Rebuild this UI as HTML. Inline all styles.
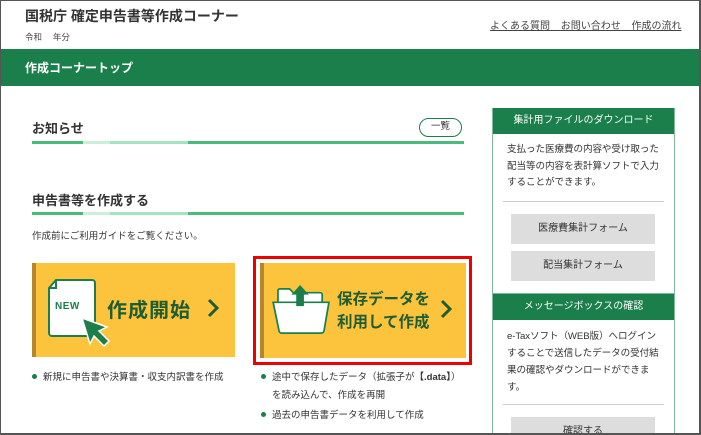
<!DOCTYPE html>
<html style="width:701px;height:435px;overflow:hidden"><head><meta charset="utf-8"><style>
*{margin:0;padding:0;box-sizing:border-box}
body{width:701px;height:435px;overflow:hidden;background:#fff;font-family:"Liberation Sans","Noto Sans CJK JP",sans-serif;color:#333;position:relative}
.frame{position:absolute;left:0;top:0;width:701px;height:435px;border:1px solid #555;border-right-width:2px;border-bottom-width:2px;pointer-events:none;z-index:10}
.abs{position:absolute;white-space:nowrap}
.bar{position:absolute;height:3px;left:32px;width:432px;background:linear-gradient(to right,#4cba7f 0,#4cba7f 51px,#cdeedb 51px,#cdeedb 78px,#a3e2c2 78px,#a3e2c2 156px,#4cba7f 156px)}
.card{position:absolute;background:#fcc43c;border-left:4px solid #b5862d}
.bul{position:absolute;font-size:9.5px;color:#333;white-space:nowrap}
.bul:before{content:"";display:inline-block;width:5px;height:5px;border-radius:50%;background:#1a7f4b;margin-right:6px;vertical-align:1px}
.side{position:absolute;left:492px;width:183px;border:1px solid #7fb89a;border-top:none;overflow:hidden}
.sh{background:#1a7f4b;color:#fff;font-size:10px;text-align:center;height:26px;line-height:26px;white-space:nowrap}
.sb{font-size:9.6px;line-height:16.5px;padding:8px 0 0 14px;color:#333;white-space:nowrap;letter-spacing:-0.1px}
.btn{background:#ddd;width:144px;height:30px;margin-left:18px;text-align:center;line-height:30px;font-size:10px;color:#333}
</style></head><body>
<div class="frame"></div>
<div class="abs" style="left:25px;top:6px;font-size:14px;font-weight:bold;color:#333">国税庁 確定申告書等作成コーナー</div>
<div class="abs" style="left:25px;top:31px;font-size:8.5px;color:#444">令和　 年分</div>
<div class="abs" style="left:490px;top:17px;font-size:10px;color:#444;text-decoration:underline;word-spacing:8px">よくある質問 お問い合わせ 作成の流れ</div>
<div class="abs" style="left:0;top:49px;width:701px;height:37px;background:#1a7f4b"></div>
<div class="abs" style="left:25px;top:59px;font-size:12px;font-weight:bold;color:#fff">作成コーナートップ</div>

<div class="abs" style="left:32px;top:118px;font-size:13px;font-weight:bold;color:#333">お知らせ</div>
<div class="abs" style="left:419px;top:118px;width:43px;height:19px;border:1.5px solid #1a7f4b;border-radius:10px;font-size:9.5px;text-align:center;line-height:16px;background:#fff">一覧</div>
<div class="bar" style="top:141px"></div>

<div class="abs" style="left:32px;top:190px;font-size:13px;font-weight:bold;color:#333">申告書等を作成する</div>
<div class="bar" style="top:212px"></div>
<div class="abs" style="left:32px;top:228px;font-size:9.5px;color:#333">作成前にご利用ガイドをご覧ください。</div>

<div class="card" style="left:32px;top:263px;width:203px;height:94px"></div>
<svg class="abs" style="left:47px;top:279px" width="66" height="68" viewBox="0 0 66 68">
<path d="M9 1 H45 a3 3 0 0 1 3 3 V54 a3 3 0 0 1 -3 3 H5 a3 3 0 0 1 -3 -3 V9 Z" fill="#fff" stroke="#1a7f4b" stroke-width="2"/>
<path d="M9 1 V9 H2" fill="none" stroke="#1a7f4b" stroke-width="2"/>
<text x="8" y="30" font-family="Liberation Sans" font-weight="bold" font-size="10" fill="#1a7f4b" letter-spacing="0.5">NEW</text>
<path d="M35 39 L60 48 L52 52 L62 62 L57 67 L47 57 L43 65 Z" fill="#1a7f4b" stroke="#fff" stroke-width="1.5"/>
</svg>
<div class="abs" style="left:107px;top:294px;font-size:20px;font-weight:bold;color:#1f5c32;letter-spacing:1px">作成開始</div>
<svg class="abs" style="left:206px;top:298px" width="14" height="20"><path d="M3 2 L11 10 L3 18" fill="none" stroke="#1f5c32" stroke-width="3"/></svg>

<div class="abs" style="left:253px;top:256px;width:219px;height:109px;border:3px solid #ee0000"></div>
<div class="card" style="left:260px;top:263px;width:206px;height:95px"></div>
<svg class="abs" style="left:272px;top:285px" width="60" height="50" viewBox="0 0 62 52">
<path d="M6 6 a2 2 0 0 1 2 -2 H18 L22 8 H50 a2 2 0 0 1 2 2 V20 H6 Z" fill="#fff" stroke="#1a7f4b" stroke-width="1.8"/>
<path d="M1 18 H59 L54 47 a3 3 0 0 1 -3 3 H10 a3 3 0 0 1 -3 -3 Z" fill="#fff" stroke="#1a7f4b" stroke-width="1.8"/>
<path d="M29 0 L38 10 H33 V22 H25 V10 H20 Z" fill="#1a7f4b"/>
</svg>
<div class="abs" style="left:337px;top:288px;font-size:15.5px;font-weight:bold;color:#1f5c32;line-height:23px">保存データを<br>利用して作成</div>
<svg class="abs" style="left:439px;top:299px" width="14" height="20"><path d="M3 2 L11 10 L3 18" fill="none" stroke="#1f5c32" stroke-width="3"/></svg>

<div class="bul" style="left:32px;top:369px">新規に申告書や決算書・収支内訳書を作成</div>
<div class="bul" style="left:261px;top:369px">途中で保存したデータ（拡張子が<b>【.data】</b>）</div>
<div class="abs" style="left:272px;top:387px;font-size:9.5px">を読み込んで、作成を再開</div>
<div class="bul" style="left:261px;top:407px">過去の申告書データを利用して作成</div>

<div class="side" style="top:108px;height:186px">
<div class="sh">集計用ファイルのダウンロード</div>
<div class="sb">支払った医療費の内容や受け取った<br>配当等の内容を表計算ソフトで入力<br>することができます。</div>
<div style="border-top:1px solid #ccc;margin:9px 10px 12px 10px"></div>
<div class="btn">医療費集計フォーム</div>
<div class="btn" style="margin-top:7px">配当集計フォーム</div>
</div>
<div class="side" style="top:294px;height:145px">
<div class="sh">メッセージボックスの確認</div>
<div class="sb" style="line-height:17px">e-Taxソフト（WEB版）へログイン<br>することで送信したデータの受付結<br>果の確認やダウンロードができま<br>す。</div>
<div style="border-top:1px solid #ccc;margin:8px 10px 12px 10px"></div>
<div class="btn">確認する</div>
</div>
</body></html>
